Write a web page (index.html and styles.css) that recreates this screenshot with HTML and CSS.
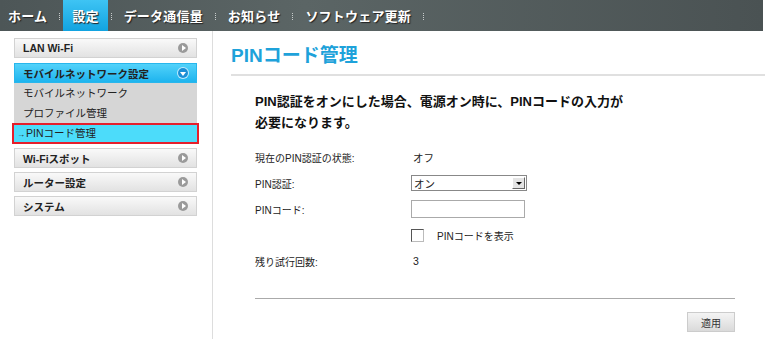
FILE: index.html
```html
<!DOCTYPE html>
<html>
<head>
    <title>PINコード管理</title>
    <link rel="stylesheet" href="styles.css">
</head>
<body>
    <nav class="topbar">
        <a class="nav-item">ホーム</a><span class="nav-sep"></span>
        <a class="nav-item active">設定</a><span class="nav-sep"></span>
        <a class="nav-item">データ通信量</a><span class="nav-sep"></span>
        <a class="nav-item">お知らせ</a><span class="nav-sep"></span>
        <a class="nav-item">ソフトウェア更新</a><span class="nav-sep"></span>
    </nav>

    <div class="layout">
        <aside class="sidebar">
            <div class="menu-item">LAN Wi-Fi<span class="menu-icon"></span></div>

            <div class="menu-group">
                <div class="menu-item open">モバイルネットワーク設定<span class="menu-icon down"></span></div>
                <div class="sub-item">モバイルネットワーク</div>
                <div class="sub-item">プロファイル管理</div>
                <div class="sub-item current"><span class="arrow">→</span>PINコード管理</div>
            </div>

            <div class="menu-item">Wi-Fiスポット<span class="menu-icon"></span></div>
            <div class="menu-item">ルーター設定<span class="menu-icon"></span></div>
            <div class="menu-item">システム<span class="menu-icon"></span></div>
        </aside>

        <main class="content">
            <h1 class="page-title">PINコード管理</h1>

            <div class="form-wrap">
                <p class="notice">PIN認証をオンにした場合、電源オン時に、PINコードの入力が<br>必要になります。</p>

                <div class="form-row">
                    <label>現在のPIN認証の状態:</label>
                    <span class="value">オフ</span>
                </div>
                <div class="form-row">
                    <label for="pinAuth">PIN認証:</label>
                    <div class="fake-select" id="pinAuth">
                        <span>オン</span>
                        <span class="select-btn"></span>
                    </div>
                </div>
                <div class="form-row">
                    <label for="pinCode">PINコード:</label>
                    <input type="text" id="pinCode" class="text-input">
                </div>
                <div class="form-row">
                    <label></label>
                    <div class="check-wrap">
                        <span class="checkbox"></span>
                        <span class="check-label">PINコードを表示</span>
                    </div>
                </div>
                <div class="form-row">
                    <label>残り試行回数:</label>
                    <span class="value">3</span>
                </div>

                <div class="form-footer">
                    <button type="button" class="apply-btn">適用</button>
                </div>
            </div>
        </main>
    </div>
</body>
</html>
```

FILE: styles.css
```css
body {
    margin: 0;
    background-color: #FFFFFF;
    font-family: "Liberation Sans", "Noto Sans CJK JP", sans-serif;
    color: #222222;
    width: 765px;
    height: 339px;
    overflow: hidden;
}

.topbar {
    display: flex;
    align-items: stretch;
    height: 31px;
    width: 763px;
    background: linear-gradient(to right, #4d5657, #5b6565 40%, #4a5253);
}

.nav-item {
    display: flex;
    align-items: center;
    padding: 0 9px;
    color: #FFFFFF;
    font-size: 13px;
    font-weight: 700;
    text-shadow: 1px 1px 1px #222222;
    letter-spacing: 0.2px;
}

.nav-item:first-child {
    padding-left: 8px;
}

.nav-item.active {
    background: linear-gradient(to bottom, #3ec4f4, #12a3e0);
}

.nav-sep {
    align-self: center;
    width: 1px;
    height: 7px;
    margin: 2px 3px 0;
    background: repeating-linear-gradient(to bottom, #c8cccc 0 1px, transparent 1px 2px);
}

.layout {
    display: flex;
    height: 308px;
}

.sidebar {
    width: 183px;
    padding: 7px 15px 0 14px;
    border-right: 1px solid #dddddd;
    display: flex;
    flex-direction: column;
    gap: 4px;
}

.menu-item {
    display: flex;
    align-items: center;
    justify-content: space-between;
    height: 18px;
    padding: 0 8px 0 8px;
    border: 1px solid #d2d2d2;
    background: linear-gradient(to bottom, #f9f9f9, #e2e2e2);
    font-size: 10.5px;
    font-weight: 700;
    color: #222222;
}

.menu-item.open {
    background: linear-gradient(to bottom, #52d2fa, #1eb4ee);
    border-color: #28b6ec;
}

.menu-icon {
    position: relative;
    width: 10px;
    height: 10px;
    border-radius: 50%;
    background-color: #9a9a9a;
}

.menu-icon::after {
    content: "";
    position: absolute;
    left: 4px;
    top: 2px;
    border-left: 4px solid #FFFFFF;
    border-top: 3px solid transparent;
    border-bottom: 3px solid transparent;
}

.menu-icon.down {
    background-color: #1b8fd6;
    box-shadow: 0 0 0 1px #bfeafc;
}

.menu-icon.down::after {
    left: 2px;
    top: 4px;
    border-top: 4px solid #FFFFFF;
    border-left: 3px solid transparent;
    border-right: 3px solid transparent;
    border-bottom: 0;
}

.menu-group {
    display: flex;
    flex-direction: column;
    margin-top: 1px;
}

.sub-item {
    height: 20px;
    line-height: 20px;
    padding-left: 9px;
    background-color: #d6d6d6;
    font-size: 10.5px;
    color: #222222;
}

.sub-item.current {
    margin: 0 -2px;
    padding-left: 3px;
    height: 17px;
    line-height: 17px;
    background-color: #4cdcfa;
    border: 2px solid #e61e2a;
}

.arrow {
    font-size: 8px;
    margin-right: 1px;
}

.content {
    flex: 1;
    padding: 14px 0 0 18px;
}

.page-title {
    margin: 0;
    padding-bottom: 7px;
    border-bottom: 2px solid #e0e0e0;
    font-size: 19px;
    font-weight: 700;
    color: #1ea2da;
    line-height: 22px;
}

.form-wrap {
    width: 480px;
    padding: 15px 0 0 24px;
}

.notice {
    margin: 0 0 11px;
    font-size: 13px;
    font-weight: 700;
    line-height: 21px;
    color: #111111;
}

.form-row {
    display: flex;
    align-items: center;
    height: 26px;
    font-size: 10px;
}

.form-row label {
    width: 156px;
    color: #222222;
}

.value {
    padding-left: 2px;
    font-size: 10.5px;
}

.fake-select {
    display: flex;
    justify-content: space-between;
    align-items: center;
    width: 112px;
    height: 14px;
    border: 1px solid #888888;
    font-size: 10.5px;
    padding-left: 2px;
}

.select-btn {
    position: relative;
    width: 13px;
    height: 12px;
    margin-right: 1px;
    background-color: #e4e4e4;
    border: 1px solid #FFFFFF;
    border-right-color: #666666;
    border-bottom-color: #666666;
    box-sizing: border-box;
}

.select-btn::after {
    content: "";
    position: absolute;
    left: 3px;
    top: 4px;
    border-top: 3px solid #000000;
    border-left: 3px solid transparent;
    border-right: 3px solid transparent;
}

.text-input {
    width: 114px;
    height: 18px;
    margin: 0;
    padding: 0;
    border: 1px solid #aaaaaa;
    box-sizing: border-box;
}

.check-wrap {
    display: flex;
    align-items: center;
    gap: 13px;
}

.checkbox {
    width: 11px;
    height: 11px;
    border: 1px solid #bbbbbb;
    border-top-color: #555555;
    border-left-color: #555555;
    background-color: #FFFFFF;
}

.check-label {
    font-size: 10px;
}

.form-footer {
    margin-top: 24px;
    border-top: 1px solid #aaaaaa;
    padding-top: 13px;
    display: flex;
    justify-content: flex-end;
}

.apply-btn {
    width: 48px;
    height: 20px;
    border: 1px solid #cccccc;
    background: linear-gradient(to bottom, #f4f4f4, #dadada);
    font-family: "Noto Sans CJK JP", sans-serif;
    font-size: 10px;
    color: #333333;
    padding: 0;
}
```
